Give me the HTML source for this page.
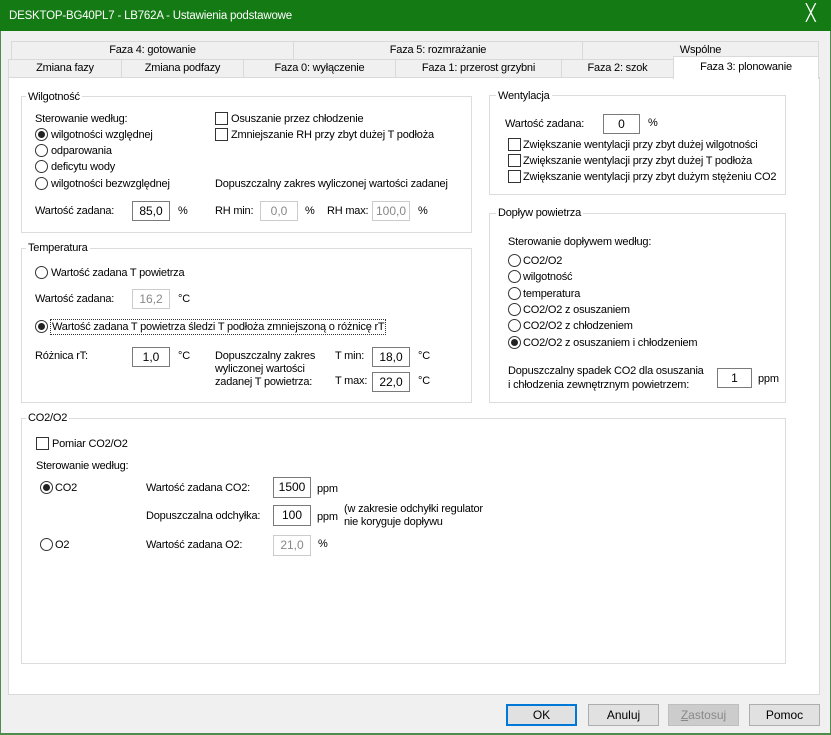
<!DOCTYPE html>
<html><head><meta charset="utf-8"><style>
*{box-sizing:border-box;margin:0;padding:0}
body{width:831px;height:735px;background:#4f8a4f;font-family:"Liberation Sans",Arial,sans-serif;font-size:11px;color:#000;position:relative;overflow:hidden}
.win{position:absolute;left:1px;top:0;width:829px;height:733px;background:#f0f0f0}
.title{position:absolute;left:0;top:0;width:831px;height:31px;background:#147a14;color:#fff;font-size:12px}
.a{position:absolute;white-space:nowrap;line-height:14px;letter-spacing:-0.2px}
.tab{position:absolute;background:#f0f0f0;border:1px solid #d9d9d9;text-align:center;line-height:16px;font-size:11px;letter-spacing:-0.2px}
.panel{position:absolute;left:8px;top:77px;width:812px;height:618px;background:#fff;border:1px solid #d9d9d9}
.grp{position:absolute;border:1px solid #dcdcdc}
.leg{position:absolute;background:#fff;padding:0 2px;line-height:14px;letter-spacing:-0.2px}
.rb{position:absolute;width:13px;height:13px;border:1px solid #333;border-radius:50%;background:#fff}
.rb.on::after{content:"";position:absolute;left:2px;top:2px;width:7px;height:7px;border-radius:50%;background:#222}
.cb{position:absolute;width:13px;height:13px;border:1px solid #333;background:#fff}
.in{position:absolute;border:1px solid #7a7a7a;background:#fff;text-align:center;line-height:18px;font-size:12px}
.in.dis{border-color:#ccc;color:#888}
.btn{position:absolute;top:704px;height:22px;width:71px;border:1px solid #adadad;background:#e1e1e1;text-align:center;line-height:20px;font-size:12px}
</style></head><body>
<div class="win"></div>
<div class="title"><span class="a" style="left:9px;top:9px;font-size:11.5px">DESKTOP-BG40PL7 - LB762A - Ustawienia podstawowe</span><span class="a" style="left:806px;top:7px;font-size:16px;font-weight:100">╳</span></div>

<div class="tab" style="left:11px;top:41px;width:283px;height:19px">Faza 4: gotowanie</div>
<div class="tab" style="left:293px;top:41px;width:290px;height:19px">Faza 5: rozmrażanie</div>
<div class="tab" style="left:582px;top:41px;width:237px;height:19px">Wspólne</div>
<div class="tab" style="left:8px;top:59px;width:114px;height:19px">Zmiana fazy</div>
<div class="tab" style="left:121px;top:59px;width:123px;height:19px">Zmiana podfazy</div>
<div class="tab" style="left:243px;top:59px;width:153px;height:19px">Faza 0: wyłączenie</div>
<div class="tab" style="left:395px;top:59px;width:167px;height:19px">Faza 1: przerost grzybni</div>
<div class="tab" style="left:561px;top:59px;width:113px;height:19px">Faza 2: szok</div>
<div class="panel"></div>
<div class="tab" style="left:673px;top:56px;width:146px;height:23px;background:#fff;border-bottom:none;line-height:20px">Faza 3: plonowanie</div>

<!-- Wilgotnosc -->
<div class="grp" style="left:21px;top:96px;width:451px;height:137px"></div>
<div class="leg" style="left:26px;top:90px">Wilgotność</div>
<div class="a" style="left:35px;top:112px">Sterowanie według:</div>
<div class="rb on" style="left:35px;top:128px"></div><div class="a" style="left:51px;top:128px">wilgotności względnej</div>
<div class="rb" style="left:35px;top:144px"></div><div class="a" style="left:51px;top:144px">odparowania</div>
<div class="rb" style="left:35px;top:160px"></div><div class="a" style="left:51px;top:160px">deficytu wody</div>
<div class="rb" style="left:35px;top:177px"></div><div class="a" style="left:51px;top:177px">wilgotności bezwzględnej</div>
<div class="cb" style="left:215px;top:112px"></div><div class="a" style="left:231px;top:112px">Osuszanie przez chłodzenie</div>
<div class="cb" style="left:215px;top:128px"></div><div class="a" style="left:231px;top:128px">Zmniejszanie RH przy zbyt dużej T podłoża</div>
<div class="a" style="left:215px;top:177px">Dopuszczalny zakres wyliczonej wartości zadanej</div>
<div class="a" style="left:35px;top:204px">Wartość zadana:</div>
<div class="in" style="left:132px;top:201px;width:38px;height:20px">85,0</div>
<div class="a" style="left:178px;top:204px">%</div>
<div class="a" style="left:215px;top:204px">RH min:</div>
<div class="in dis" style="left:260px;top:201px;width:38px;height:20px">0,0</div>
<div class="a" style="left:305px;top:204px">%</div>
<div class="a" style="left:327px;top:204px">RH max:</div>
<div class="in dis" style="left:372px;top:201px;width:38px;height:20px">100,0</div>
<div class="a" style="left:418px;top:204px">%</div>

<!-- Temperatura -->
<div class="grp" style="left:21px;top:248px;width:451px;height:155px"></div>
<div class="leg" style="left:26px;top:241px">Temperatura</div>
<div class="rb" style="left:35px;top:266px"></div><div class="a" style="left:51px;top:266px">Wartość zadana T powietrza</div>
<div class="a" style="left:35px;top:292px">Wartość zadana:</div>
<div class="in dis" style="left:132px;top:289px;width:38px;height:20px">16,2</div>
<div class="a" style="left:178px;top:292px">°C</div>
<div class="rb on" style="left:35px;top:320px"></div><div class="a" style="left:50px;top:319px;border:1px dotted #333;padding:0 1px">Wartość zadana T powietrza śledzi T podłoża zmniejszoną o różnicę rT</div>
<div class="a" style="left:35px;top:349px">Różnica rT:</div>
<div class="in" style="left:132px;top:347px;width:38px;height:20px">1,0</div>
<div class="a" style="left:178px;top:349px">°C</div>
<div class="a" style="left:215px;top:350px;line-height:13px">Dopuszczalny zakres<br>wyliczonej wartości<br>zadanej T powietrza:</div>
<div class="a" style="left:335px;top:349px">T min:</div>
<div class="in" style="left:372px;top:347px;width:38px;height:20px">18,0</div>
<div class="a" style="left:418px;top:349px">°C</div>
<div class="a" style="left:335px;top:374px">T max:</div>
<div class="in" style="left:372px;top:372px;width:38px;height:20px">22,0</div>
<div class="a" style="left:418px;top:374px">°C</div>

<!-- Wentylacja -->
<div class="grp" style="left:489px;top:95px;width:297px;height:100px"></div>
<div class="leg" style="left:496px;top:89px">Wentylacja</div>
<div class="a" style="left:505px;top:117px">Wartość zadana:</div>
<div class="in" style="left:603px;top:114px;width:37px;height:20px">0</div>
<div class="a" style="left:648px;top:116px">%</div>
<div class="cb" style="left:508px;top:138px"></div><div class="a" style="left:523px;top:138px">Zwiększanie wentylacji przy zbyt dużej wilgotności</div>
<div class="cb" style="left:508px;top:154px"></div><div class="a" style="left:523px;top:154px">Zwiększanie wentylacji przy zbyt dużej T podłoża</div>
<div class="cb" style="left:508px;top:170px"></div><div class="a" style="left:523px;top:170px">Zwiększanie wentylacji przy zbyt dużym stężeniu CO2</div>

<!-- Doplyw -->
<div class="grp" style="left:489px;top:213px;width:297px;height:190px"></div>
<div class="leg" style="left:496px;top:206px">Dopływ powietrza</div>
<div class="a" style="left:508px;top:235px">Sterowanie dopływem według:</div>
<div class="rb" style="left:508px;top:254px"></div><div class="a" style="left:523px;top:254px">CO2/O2</div>
<div class="rb" style="left:508px;top:270px"></div><div class="a" style="left:523px;top:270px">wilgotność</div>
<div class="rb" style="left:508px;top:287px"></div><div class="a" style="left:523px;top:287px">temperatura</div>
<div class="rb" style="left:508px;top:303px"></div><div class="a" style="left:523px;top:303px">CO2/O2 z osuszaniem</div>
<div class="rb" style="left:508px;top:319px"></div><div class="a" style="left:523px;top:319px">CO2/O2 z chłodzeniem</div>
<div class="rb on" style="left:508px;top:336px"></div><div class="a" style="left:523px;top:336px">CO2/O2 z osuszaniem i chłodzeniem</div>
<div class="a" style="left:508px;top:364px;line-height:14px">Dopuszczalny spadek CO2 dla osuszania<br>i chłodzenia zewnętrznym powietrzem:</div>
<div class="in" style="left:717px;top:368px;width:35px;height:20px">1</div>
<div class="a" style="left:758px;top:372px">ppm</div>

<!-- CO2 -->
<div class="grp" style="left:21px;top:418px;width:765px;height:246px"></div>
<div class="leg" style="left:26px;top:411px">CO2/O2</div>
<div class="cb" style="left:36px;top:437px"></div><div class="a" style="left:52px;top:437px">Pomiar CO2/O2</div>
<div class="a" style="left:36px;top:459px">Sterowanie według:</div>
<div class="rb on" style="left:40px;top:481px"></div><div class="a" style="left:55px;top:481px">CO2</div>
<div class="a" style="left:146px;top:481px">Wartość zadana CO2:</div>
<div class="in" style="left:273px;top:477px;width:38px;height:21px">1500</div>
<div class="a" style="left:317px;top:482px">ppm</div>
<div class="a" style="left:146px;top:509px">Dopuszczalna odchyłka:</div>
<div class="in" style="left:273px;top:505px;width:38px;height:21px">100</div>
<div class="a" style="left:317px;top:510px">ppm</div>
<div class="a" style="left:344px;top:503px;line-height:13px">(w zakresie odchyłki regulator<br>nie koryguje dopływu</div>
<div class="rb" style="left:40px;top:538px"></div><div class="a" style="left:55px;top:538px">O2</div>
<div class="a" style="left:146px;top:538px">Wartość zadana O2:</div>
<div class="in dis" style="left:273px;top:535px;width:38px;height:21px">21,0</div>
<div class="a" style="left:318px;top:537px">%</div>

<div class="btn" style="left:506px;border:2px solid #0078d7;line-height:18px">OK</div>
<div class="btn" style="left:588px">Anuluj</div>
<div class="btn" style="left:668px;background:#ccc;border-color:#bfbfbf;color:#888"><u>Z</u>astosuj</div>
<div class="btn" style="left:749px">Pomoc</div>
</body></html>
